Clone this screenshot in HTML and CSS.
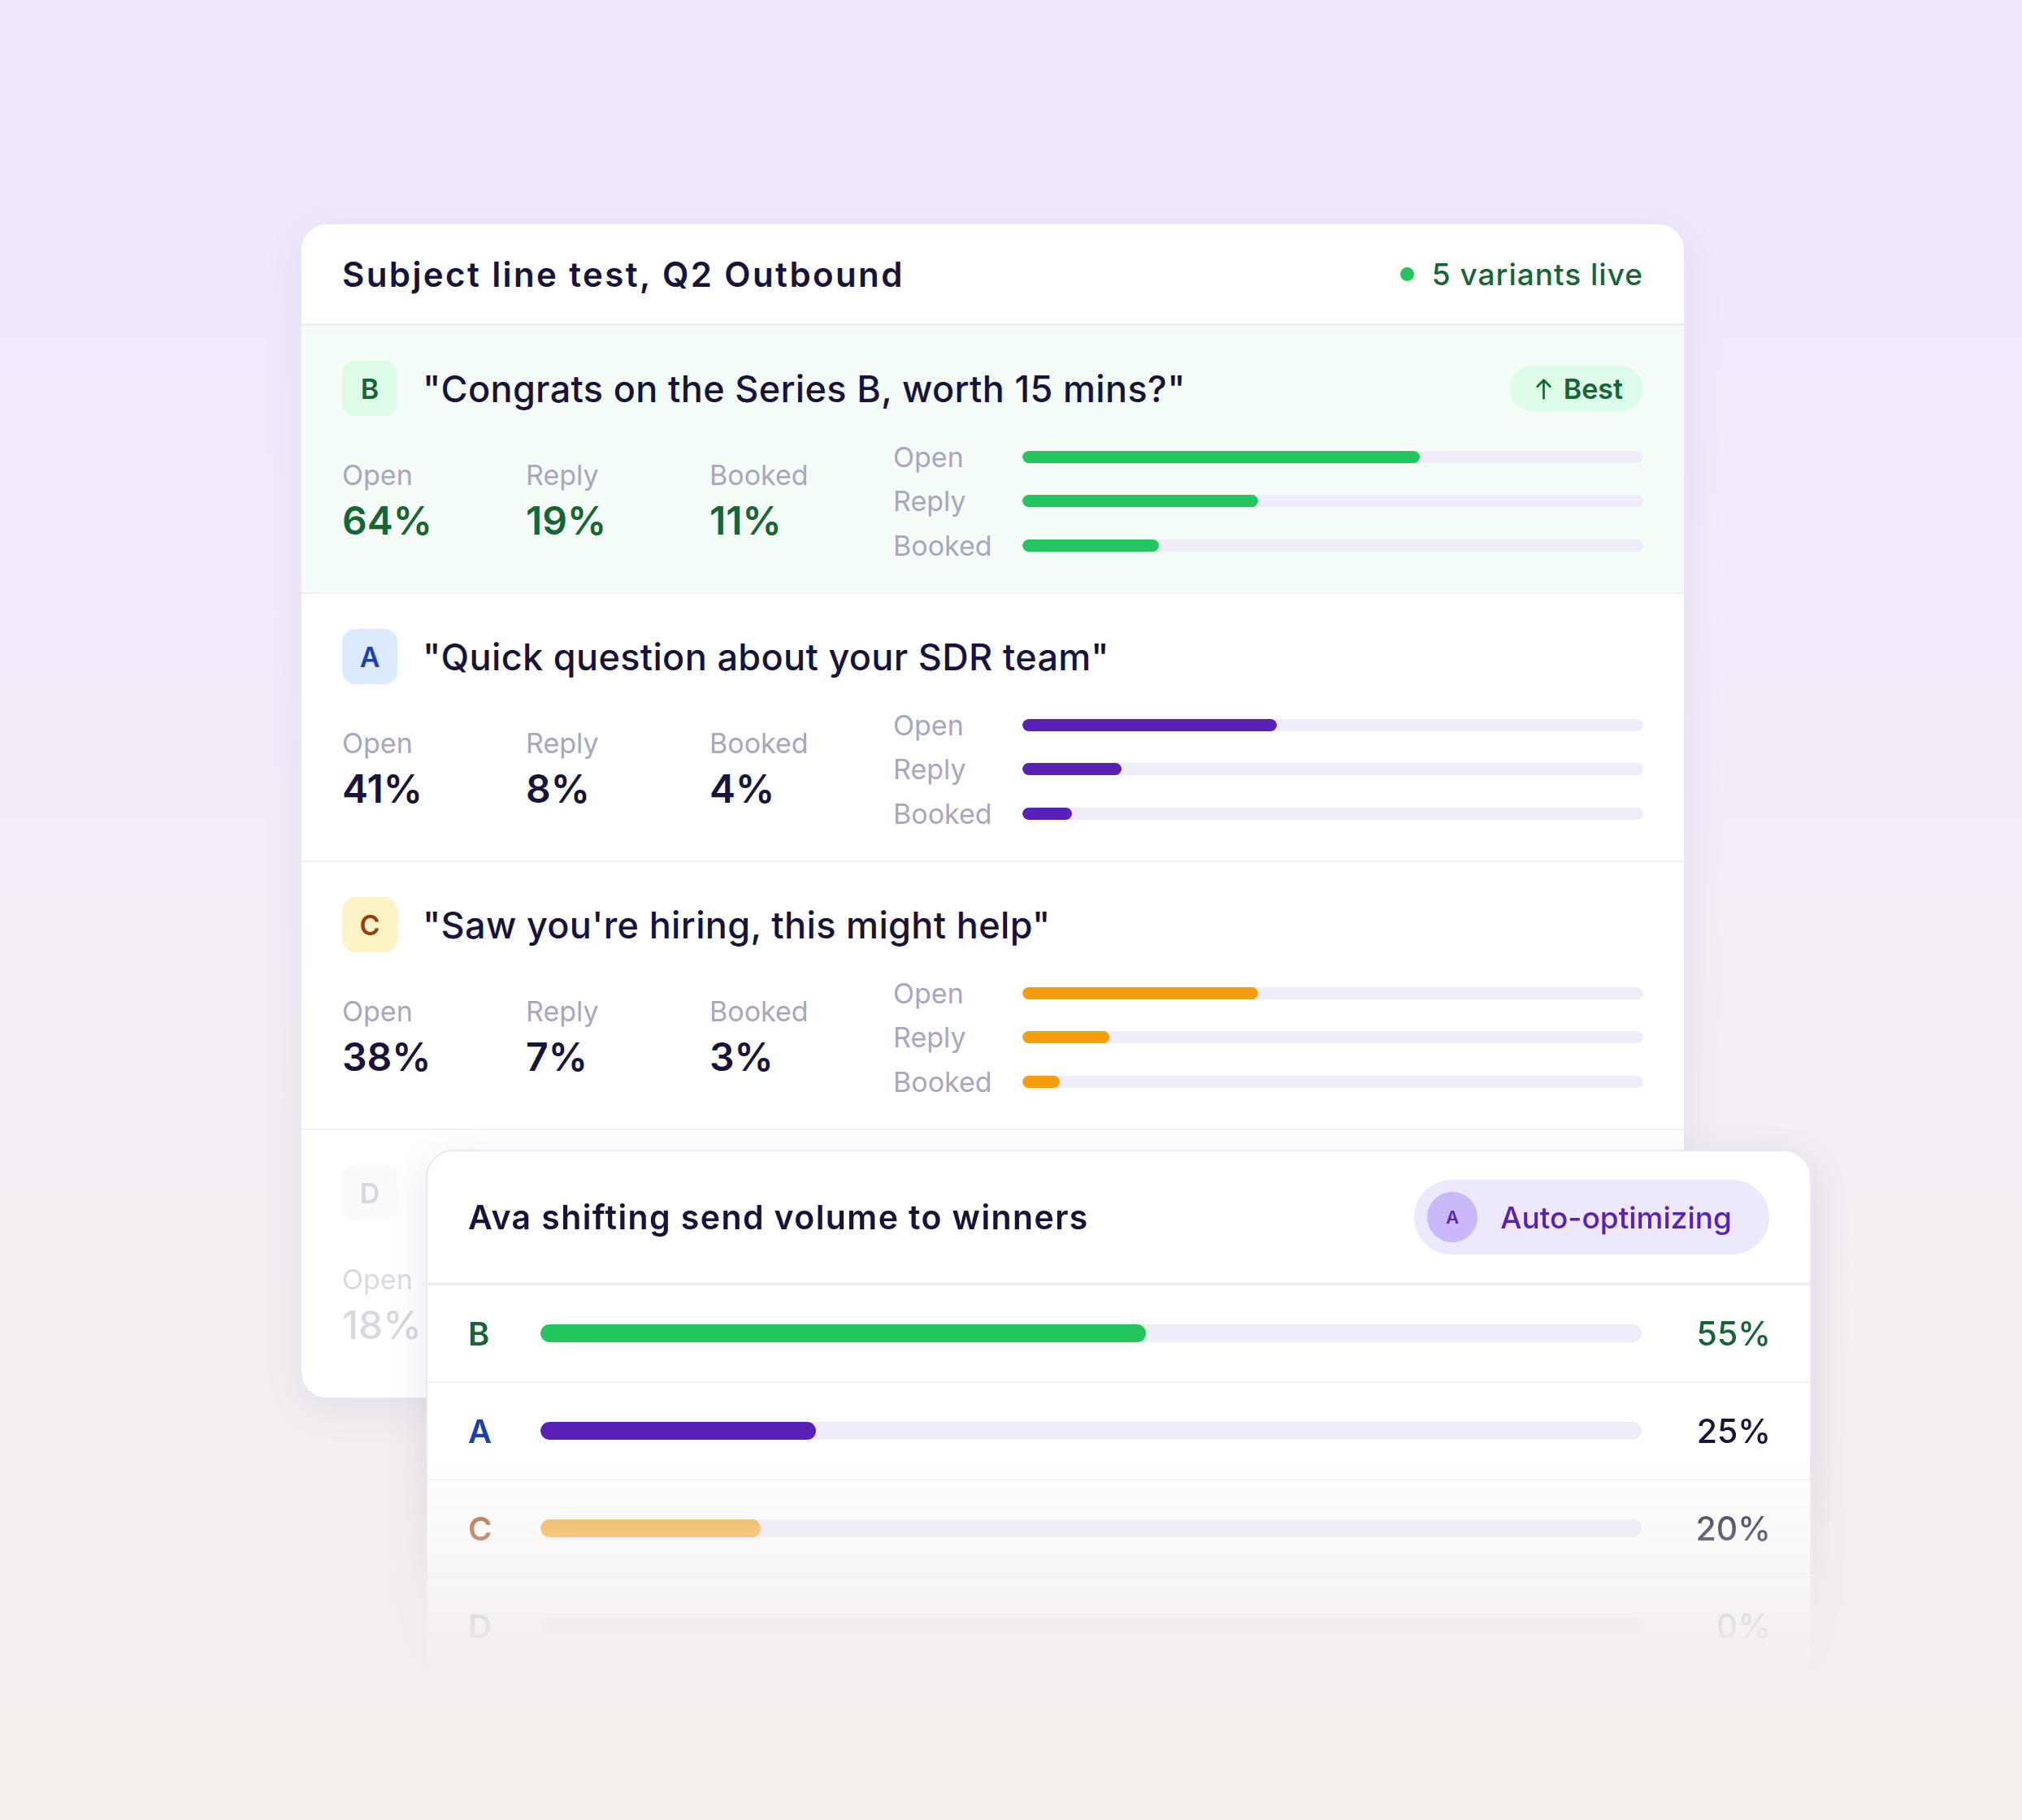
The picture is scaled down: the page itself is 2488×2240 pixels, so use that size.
FILE: index.html
```html
<!DOCTYPE html>
<html lang="en">
<head>
    <meta charset="UTF-8">
    <meta name="viewport" content="width=device-width, initial-scale=1.0">
    <title>Subject line test</title>
    <link rel="stylesheet" href="styles.css">
</head>
<body>
    <main class="stage">
        <section class="test-card">
            <header class="card-head">
                <h1 class="card-title">Subject line test, Q2 Outbound</h1>
                <span class="live"><span class="live-dot"></span>5 variants live</span>
            </header>

            <div class="variant variant-best">
                <div class="variant-head">
                    <span class="badge badge-b">B</span>
                    <span class="subject">"Congrats on the Series B, worth 15 mins?"</span>
                    <span class="best-pill">
                        <svg class="best-arrow" viewBox="0 0 18 24" width="21" height="27"><path d="M9 22.5V2.5M2 9.5l7-7 7 7" fill="none" stroke="currentColor" stroke-width="2.4" stroke-linecap="round" stroke-linejoin="round"/></svg>
                        Best
                    </span>
                </div>
                <div class="variant-body">
                    <div class="stat"><span class="stat-label">Open</span><span class="stat-value">64%</span></div>
                    <div class="stat"><span class="stat-label">Reply</span><span class="stat-value">19%</span></div>
                    <div class="stat"><span class="stat-label">Booked</span><span class="stat-value">11%</span></div>
                    <div class="bars">
                        <div class="bar-row"><span class="bar-label">Open</span><div class="track"><div class="fill" style="width:64%"></div></div></div>
                        <div class="bar-row"><span class="bar-label">Reply</span><div class="track"><div class="fill" style="width:38%"></div></div></div>
                        <div class="bar-row"><span class="bar-label">Booked</span><div class="track"><div class="fill" style="width:22%"></div></div></div>
                    </div>
                </div>
            </div>

            <div class="variant variant-a">
                <div class="variant-head">
                    <span class="badge badge-a">A</span>
                    <span class="subject">"Quick question about your SDR team"</span>
                </div>
                <div class="variant-body">
                    <div class="stat"><span class="stat-label">Open</span><span class="stat-value">41%</span></div>
                    <div class="stat"><span class="stat-label">Reply</span><span class="stat-value">8%</span></div>
                    <div class="stat"><span class="stat-label">Booked</span><span class="stat-value">4%</span></div>
                    <div class="bars">
                        <div class="bar-row"><span class="bar-label">Open</span><div class="track"><div class="fill" style="width:41%"></div></div></div>
                        <div class="bar-row"><span class="bar-label">Reply</span><div class="track"><div class="fill" style="width:16%"></div></div></div>
                        <div class="bar-row"><span class="bar-label">Booked</span><div class="track"><div class="fill" style="width:8%"></div></div></div>
                    </div>
                </div>
            </div>

            <div class="variant variant-c">
                <div class="variant-head">
                    <span class="badge badge-c">C</span>
                    <span class="subject">"Saw you're hiring, this might help"</span>
                </div>
                <div class="variant-body">
                    <div class="stat"><span class="stat-label">Open</span><span class="stat-value">38%</span></div>
                    <div class="stat"><span class="stat-label">Reply</span><span class="stat-value">7%</span></div>
                    <div class="stat"><span class="stat-label">Booked</span><span class="stat-value">3%</span></div>
                    <div class="bars">
                        <div class="bar-row"><span class="bar-label">Open</span><div class="track"><div class="fill" style="width:38%"></div></div></div>
                        <div class="bar-row"><span class="bar-label">Reply</span><div class="track"><div class="fill" style="width:14%"></div></div></div>
                        <div class="bar-row"><span class="bar-label">Booked</span><div class="track"><div class="fill" style="width:6%"></div></div></div>
                    </div>
                </div>
            </div>

            <!-- last variant is mostly hidden behind the floating card -->
            <div class="variant variant-d">
                <div class="variant-head">
                    <span class="badge badge-d">D</span>
                </div>
                <div class="variant-body">
                    <div class="stat"><span class="stat-label">Open</span><span class="stat-value">18%</span></div>
                </div>
            </div>
        </section>

        <!-- floating card over the list -->
        <div class="shift-wrap">
            <section class="shift-card">
                <header class="shift-head">
                    <h2 class="shift-title">Ava shifting send volume to winners</h2>
                    <span class="auto-pill"><span class="avatar">A</span>Auto-optimizing</span>
                </header>
                <div class="shift-row row-b">
                    <span class="shift-letter">B</span>
                    <div class="track track-lg"><div class="fill" style="width:55%"></div></div>
                    <span class="shift-pct">55%</span>
                </div>
                <div class="shift-row row-a">
                    <span class="shift-letter">A</span>
                    <div class="track track-lg"><div class="fill" style="width:25%"></div></div>
                    <span class="shift-pct">25%</span>
                </div>
                <div class="shift-row row-c">
                    <span class="shift-letter">C</span>
                    <div class="track track-lg"><div class="fill" style="width:20%"></div></div>
                    <span class="shift-pct">20%</span>
                </div>
                <div class="shift-row row-d">
                    <span class="shift-letter">D</span>
                    <div class="track track-lg"><div class="fill" style="width:0%"></div></div>
                    <span class="shift-pct">0%</span>
                </div>
            </section>
        </div>
    </main>
</body>
</html>
```

FILE: styles.css
```css
html, body {
    margin: 0;
    height: 100%;
}
body {
    font-family: Inter, "Noto Sans", sans-serif;
    color: #17133a;
    background: linear-gradient(180deg, #efe7fd 0%, #f1ebfa 30%, #f3eef4 60%, #f3efec 100%);
    overflow: hidden;
}
.stage {
    position: relative;
    padding: 274px 0 0 369px;
}

/* main card */
.test-card {
    width: 1705px;
    height: 1448px;
    box-sizing: border-box;
    background: #fff;
    border: 2px solid #ebe7f6;
    border-radius: 34px;
    box-shadow: 0 12px 50px rgba(90, 70, 150, 0.08);
    overflow: hidden;
}
.card-head {
    height: 125px;
    box-sizing: border-box;
    padding: 0 50px;
    display: flex;
    align-items: center;
    justify-content: space-between;
    border-bottom: 3px solid #eeebf6;
}
.card-title {
    margin: 0;
    font-size: 42px;
    font-weight: 600;
    letter-spacing: 2.4px;
}
.live {
    display: flex;
    align-items: center;
    gap: 22px;
    font-size: 37px;
    font-weight: 500;
    letter-spacing: 1px;
    color: #166534;
}
.live-dot {
    width: 17px;
    height: 17px;
    border-radius: 50%;
    background: #22c55e;
}

.variant {
    height: 330px;
    box-sizing: border-box;
    padding: 43px 50px 0;
    border-bottom: 2px solid #f1eff6;
}
.variant-best {
    background: #f4fdf8;
}
.variant-head {
    display: flex;
    align-items: center;
    height: 68px;
}
.badge {
    width: 68px;
    height: 68px;
    border-radius: 16px;
    display: flex;
    align-items: center;
    justify-content: center;
    font-size: 34px;
    font-weight: 600;
    flex-shrink: 0;
}
.badge-b { background: #dcfce7; color: #166534; }
.badge-a { background: #dbeafe; color: #1e40af; }
.badge-c { background: #fef3c7; color: #92400e; }
.badge-d { background: #f3f4f6; color: #9ca3af; }
.subject {
    margin-left: 31px;
    font-size: 45px;
    font-weight: 500;
    letter-spacing: 0.35px;
    white-space: nowrap;
}
.best-pill {
    margin-left: auto;
    height: 56px;
    padding: 0 25px 0 32px;
    border-radius: 28px;
    background: #dcfce7;
    color: #166534;
    display: flex;
    align-items: center;
    gap: 14px;
    font-size: 34px;
    font-weight: 600;
}
.best-arrow {
    display: block;
}

.variant-body {
    margin-top: 23px;
    height: 163px;
    display: grid;
    grid-template-columns: 226px 226px 226px 1fr;
    align-items: center;
}
.stat {
    display: flex;
    flex-direction: column;
}
.stat-label {
    font-size: 34px;
    line-height: 48px;
    color: #a9a6bd;
}
.stat-value {
    font-size: 48px;
    line-height: 64px;
    font-weight: 600;
}
.variant-best .stat-value { color: #166534; }

.bars {
    display: flex;
    flex-direction: column;
}
.bar-row {
    height: 54.5px;
    display: grid;
    grid-template-columns: 159px 1fr;
    align-items: center;
}
.bar-label {
    font-size: 34px;
    color: #a9a6bd;
}
.track {
    height: 15px;
    border-radius: 8px;
    background: #efecf9;
    overflow: hidden;
}
.fill {
    height: 100%;
    border-radius: 8px;
}
.variant-best .fill { background: #22c55e; }
.variant-a .fill { background: #5b21b6; }
.variant-c .fill { background: #f59e0b; }

.variant-d {
    opacity: 0.42;
    border-bottom: 0;
}
.variant-d .stat-value {
    color: #a3a7b3;
    font-weight: 500;
}

/* overlay card */
.shift-wrap {
    position: absolute;
    left: 464px;
    top: 1355px;
    padding: 60px;
    -webkit-mask-image: linear-gradient(180deg, #000 0, #000 430px, rgba(0, 0, 0, 0.65) 530px, rgba(0, 0, 0, 0.12) 655px, transparent 720px);
    mask-image: linear-gradient(180deg, #000 0, #000 430px, rgba(0, 0, 0, 0.65) 530px, rgba(0, 0, 0, 0.12) 655px, transparent 720px);
}
.shift-card {
    width: 1705px;
    height: 660px;
    box-sizing: border-box;
    background: #fff;
    border: 2px solid #ebe7f6;
    border-radius: 34px;
    box-shadow: 0 16px 50px rgba(80, 60, 130, 0.13);
    overflow: hidden;
}
.shift-head {
    height: 165px;
    box-sizing: border-box;
    padding: 0 50px;
    display: flex;
    align-items: center;
    justify-content: space-between;
    border-bottom: 3px solid #eeebf6;
}
.shift-title {
    margin: 0;
    font-size: 41px;
    font-weight: 600;
    letter-spacing: 1.4px;
}
.auto-pill {
    height: 92px;
    box-sizing: border-box;
    padding: 0 46px 0 16px;
    border-radius: 46px;
    background: #ede8fd;
    color: #5b21b6;
    display: flex;
    align-items: center;
    gap: 28px;
    font-size: 37px;
    font-weight: 500;
}
.avatar {
    width: 62px;
    height: 62px;
    border-radius: 50%;
    background: #c9b9fb;
    display: flex;
    align-items: center;
    justify-content: center;
    font-size: 22px;
    font-weight: 600;
}
.shift-row {
    height: 120px;
    box-sizing: border-box;
    padding: 0 48px 0 50px;
    display: grid;
    grid-template-columns: 89px 1fr 159px;
    align-items: center;
    border-bottom: 2px solid #f4f2f8;
}
.shift-letter {
    font-size: 40px;
    font-weight: 600;
}
.track-lg {
    height: 22px;
    border-radius: 11px;
}
.track-lg .fill {
    border-radius: 11px;
}
.shift-pct {
    text-align: right;
    font-size: 41px;
    font-weight: 500;
}
.row-b .shift-letter, .row-b .shift-pct { color: #166534; }
.row-b .fill { background: #22c55e; }
.row-a .shift-letter { color: #1e40af; }
.row-a .fill { background: #5b21b6; }
.row-c .shift-letter { color: #a8582a; }
.row-c .fill { background: #f4ae3d; }
.row-d .shift-letter { color: #9ca3af; }
.row-d .shift-pct { color: #9ca3af; }
```
